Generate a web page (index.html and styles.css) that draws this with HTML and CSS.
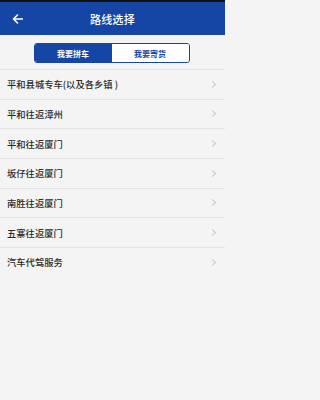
FILE: index.html
```html
<!DOCTYPE html>
<html lang="zh-CN">
<head>
<meta charset="utf-8">
<meta name="viewport" content="width=225">
<title>路线选择</title>
<link rel="stylesheet" href="styles.css">
</head>
<body>
<div class="page">
  <div class="statusbar"></div>
  <header class="topbar">
    <span class="back">
      <svg width="11" height="10" viewBox="0 0 11 10"><path d="M10.5 5H1.5M5.5 1L1.5 5l4 4" fill="none" stroke="#fff" stroke-width="1.6" stroke-linecap="round" stroke-linejoin="round"/></svg>
    </span>
    <h1 class="title">路线选择</h1>
  </header>
  <div class="tabs-wrap">
    <div class="tabs">
      <div class="tab active">我要拼车</div>
      <div class="tab">我要寄货</div>
    </div>
  </div>
  <ul class="list">
    <li class="row"><span>平和县城专车(以及各乡镇 )</span><i class="chev"></i></li>
    <li class="row"><span>平和往返漳州</span><i class="chev"></i></li>
    <li class="row"><span>平和往返厦门</span><i class="chev"></i></li>
    <li class="row"><span>坂仔往返厦门</span><i class="chev"></i></li>
    <li class="row"><span>南胜往返厦门</span><i class="chev"></i></li>
    <li class="row"><span>五寨往返厦门</span><i class="chev"></i></li>
    <li class="row"><span>汽车代驾服务</span><i class="chev"></i></li>
  </ul>
</div>
</body>
</html>
```
FILE: styles.css
```css
html, body {
  margin: 0;
  padding: 0;
  background: #f4f4f4;
  font-family: "Noto Sans CJK SC", "Noto Sans", sans-serif;
  color: #333;
  height: 100%;
}
.page {
  width: 225px;
  min-height: 400px;
  background: #f4f4f4;
}
.statusbar {
  height: 2px;
  background: #111;
}
.topbar {
  height: 33px;
  background: #1546a6;
  display: flex;
  align-items: center;
  justify-content: center;
  position: relative;
}
.back {
  position: absolute;
  left: 12px;
  top: 12px;
  display: flex;
}
.title {
  margin: 0;
  color: #fff;
  font-size: 11px;
  font-weight: 500;
  letter-spacing: 0.3px;
}
.tabs-wrap {
  height: 34px;
  display: flex;
  align-items: flex-start;
  justify-content: center;
  padding-top: 8px;
  box-sizing: border-box;
}
.tabs {
  width: 156px;
  height: 20px;
  display: flex;
  border: 1px solid #1546a6;
  border-radius: 3px;
  box-sizing: border-box;
  overflow: hidden;
  margin-left: -2px;
}
.tab {
  flex: 1;
  display: flex;
  align-items: center;
  justify-content: center;
  font-size: 8px;
  font-weight: bold;
  color: #1546a6;
  background: #fff;
}
.tab.active {
  background: #1546a6;
  color: #fff;
}
.list {
  list-style: none;
  margin: 0;
  padding: 0;
}
.row {
  height: 29.67px;
  box-sizing: border-box;
  border-top: 1px solid #e4e4e4;
  display: flex;
  align-items: center;
  justify-content: space-between;
  padding: 0 9px 0 7px;
  font-size: 9.3px;
  font-weight: 500;
  color: #2a2a2a;
}
.chev {
  width: 4px;
  height: 4px;
  border-top: 1px solid #c8c8c8;
  border-right: 1px solid #c8c8c8;
  transform: rotate(45deg);
  margin-right: 1px;
}
```
